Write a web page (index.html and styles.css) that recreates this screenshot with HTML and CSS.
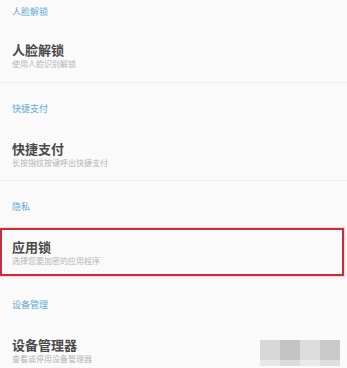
FILE: index.html
```html
<!DOCTYPE html>
<html lang="zh-CN">
<head>
<meta charset="utf-8">
<title>设置</title>
<link rel="stylesheet" href="styles.css">
</head>
<body>
<div class="page">
  <section class="group first">
    <div class="group-header">人脸解锁</div>
    <div class="item">
      <div class="item-title">人脸解锁</div>
      <div class="item-sub">使用人脸识别解锁</div>
    </div>
  </section>
  <section class="group">
    <div class="group-header">快捷支付</div>
    <div class="item">
      <div class="item-title">快捷支付</div>
      <div class="item-sub">长按指纹按键呼出快捷支付</div>
    </div>
  </section>
  <section class="group">
    <div class="group-header">隐私</div>
    <div class="item highlighted">
      <div class="item-title">应用锁</div>
      <div class="item-sub">选择您要加密的应用程序</div>
      <div class="highlight-box"></div>
    </div>
  </section>
  <section class="group">
    <div class="group-header">设备管理</div>
    <div class="item">
      <div class="item-title">设备管理器</div>
      <div class="item-sub">查看或停用设备管理器</div>
    </div>
  </section>
  <div class="watermark">
    <div class="wm-row">
      <span class="wm wm1"></span><span class="wm wm2"></span><span class="wm wm3"></span><span class="wm wm4"></span>
    </div>
    <div class="wm-row strip">
      <span class="wm wm1"></span><span class="wm wm2"></span><span class="wm wm3"></span><span class="wm wm4"></span>
    </div>
  </div>
</div>
</body>
</html>
```

FILE: styles.css
```css
html, body {
  margin: 0;
  padding: 0;
  background: #fafafa;
}
body {
  width: 347px;
  height: 368px;
  overflow: hidden;
  font-family: "Noto Sans CJK SC", "Noto Sans", sans-serif;
}
.page {
  position: relative;
  height: 368px;
}
.group {
  border-bottom: 1px solid #f0f0f0;
}
.group-header {
  padding: 21px 0 9px 12px;
  height: 10px;
  line-height: 10px;
  font-size: 9px;
  color: #62a9dc;
}
.first .group-header {
  padding-top: 7px;
}
.item {
  position: relative;
  height: 57px;
  box-sizing: border-box;
  padding: 18px 0 0 12px;
}
.first .item {
  height: 56px;
  padding-top: 16px;
}
.item-title {
  font-size: 13px;
  line-height: 16px;
  height: 16px;
  font-weight: 700;
  color: #4a4a4a;
}
.item-sub {
  font-size: 8px;
  line-height: 12px;
  height: 12px;
  color: #b4b4b4;
}
.highlight-box {
  position: absolute;
  left: 0;
  top: 7px;
  width: 344px;
  height: 48px;
  box-sizing: border-box;
  border: 2px solid #c52f3c;
  box-shadow: 0 0 1px 1px rgba(230, 140, 150, 0.35);
}
.watermark {
  position: absolute;
  left: 260px;
  top: 340px;
  display: flex;
  flex-direction: column;
}
.wm-row {
  display: flex;
  height: 20px;
}
.wm-row.strip {
  height: 6px;
  opacity: 0.55;
}
.wm {
  width: 20px;
  height: 100%;
}
.wm1 { background: #d8d8d8; }
.wm2 { background: #c4c4c4; }
.wm3 { background: #dcdcdc; }
.wm4 { background: #c9c9c9; }
```
